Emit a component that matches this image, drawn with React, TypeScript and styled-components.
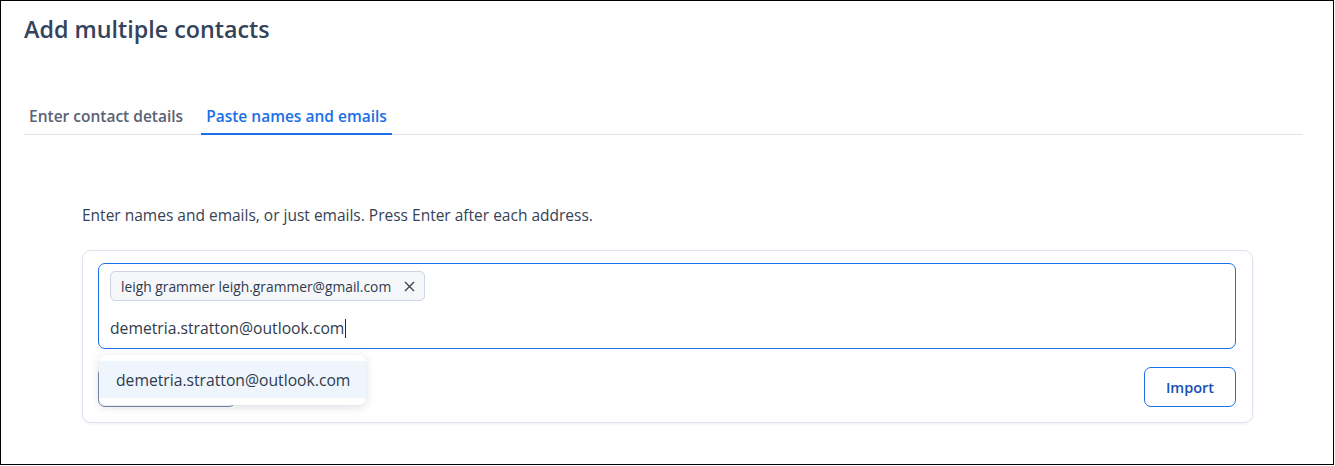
import React from "react";
import styled, { createGlobalStyle } from "styled-components";

const Global = createGlobalStyle`
  html, body { margin: 0; padding: 0; background: #fff; }
  body { font-family: "Open Sans", "Noto Sans", sans-serif; }
  * { box-sizing: border-box; }
`;

const Frame = styled.div`
  width: 1334px;
  height: 465px;
  border: 1px solid #000;
  padding: 12px 30px 0 23px;
  display: flex;
  flex-direction: column;
`;

const Title = styled.h1`
  margin: 0;
  font-size: 23.3px;
  line-height: 32px;
  font-weight: 600;
  color: #34435a;
`;

const TabList = styled.div`
  margin-top: 55px;
  display: flex;
  gap: 13px;
  border-bottom: 1px solid #dfe5ec;
  height: 35px;
`;

const Tab = styled.div<{ $active?: boolean }>`
  padding: 0 5px;
  font-size: 15.5px;
  font-weight: 600;
  line-height: 33px;
  color: ${(p) => (p.$active ? "#1a6fe8" : "#596273")};
  border-bottom: 2px solid ${(p) => (p.$active ? "#1a6fe8" : "transparent")};
  margin-bottom: -1px;
`;

const Content = styled.div`
  padding: 0 50px 0 58px;
  margin-top: 70px;
`;

const Instruction = styled.p`
  margin: 0;
  font-size: 15.5px;
  line-height: 20px;
  color: #364256;
`;

const Card = styled.div`
  margin-top: 25px;
  border: 1px solid #dde3ee;
  border-radius: 9px;
  box-shadow: 0 1px 3px rgba(30, 50, 90, 0.08);
  padding: 12px 16px 15px 15px;
  display: flex;
  flex-direction: column;
  gap: 18px;
  position: relative;
`;

const InputBox = styled.div`
  height: 86px;
  border: 1px solid #1a6fe8;
  border-radius: 7px;
  padding: 7px 11px;
  display: flex;
  flex-direction: column;
  align-items: flex-start;
  gap: 16px;
`;

const Chip = styled.div`
  display: flex;
  align-items: center;
  gap: 13px;
  height: 30px;
  padding: 0 9px 0 10px;
  border: 1px solid #cdd5e2;
  border-radius: 5px;
  background: #f5f7fa;
  font-size: 13.8px;
  color: #2f3b4d;
`;

const Typed = styled.div`
  font-size: 15.7px;
  line-height: 22px;
  color: #2f3b4d;
  display: flex;
  align-items: center;
`;

const Caret = styled.span`
  display: inline-block;
  width: 1px;
  height: 19px;
  background: #1f2a38;
  margin-left: 1px;
`;

const ButtonRow = styled.div`
  display: flex;
  justify-content: space-between;
  align-items: center;
`;

const Button = styled.button<{ $muted?: boolean }>`
  height: 40px;
  min-width: ${(p) => (p.$muted ? "138px" : "92px")};
  padding: 0 20px;
  border-radius: 7px;
  background: #fff;
  border: 1px solid ${(p) => (p.$muted ? "#7d8bab" : "#1a6fe8")};
  color: #1650b4;
  font-family: inherit;
  font-size: 14.5px;
  font-weight: 600;
`;

const Dropdown = styled.div`
  position: absolute;
  left: 16px;
  top: 104px;
  width: 267px;
  padding: 6px 0 7px;
  background: #fff;
  border-radius: 7px;
  box-shadow: 0 2px 8px rgba(30, 50, 90, 0.16);
`;

const Option = styled.div`
  height: 37px;
  padding-left: 17px;
  background: #eef5fd;
  display: flex;
  align-items: center;
  font-size: 15.7px;
  color: #2f3b4d;
`;

const CloseIcon = () => (
  <svg width="11" height="11" viewBox="0 0 11 11" fill="none" stroke="#3a4455" strokeWidth="1.4">
    <path d="M1 1L10 10M10 1L1 10" />
  </svg>
);

export default function App() {
  return (
    <>
      <Global />
      <Frame>
        <Title>Add multiple contacts</Title>
        <TabList>
          <Tab>Enter contact details</Tab>
          <Tab $active>Paste names and emails</Tab>
        </TabList>
        <Content>
          <Instruction>Enter names and emails, or just emails. Press Enter after each address.</Instruction>
          <Card>
            <InputBox>
              <Chip>
                leigh grammer leigh.grammer@gmail.com
                <CloseIcon />
              </Chip>
              <Typed>
                demetria.stratton@outlook.com
                <Caret />
              </Typed>
            </InputBox>
            <ButtonRow>
              <Button $muted aria-label="Add contacts" />
              <Button>Import</Button>
            </ButtonRow>
            <Dropdown>
              <Option>demetria.stratton@outlook.com</Option>
            </Dropdown>
          </Card>
        </Content>
      </Frame>
    </>
  );
}
